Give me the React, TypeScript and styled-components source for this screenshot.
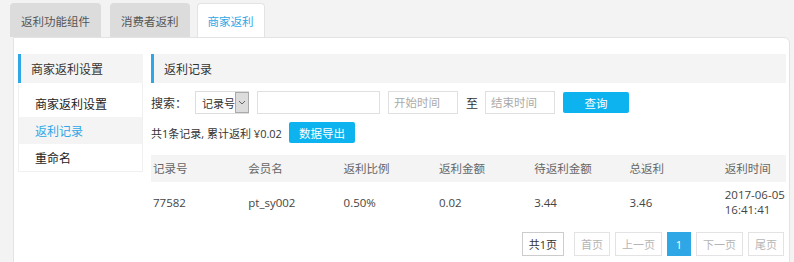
import * as React from "react";
import styled, { createGlobalStyle } from "styled-components";

const colors = {
  page: "#f3f3f3",
  line: "#e3e3e3",
  tabOff: "#dcdcdc",
  text: "#333",
  muted: "#666",
  blue: "#2fa7e6",
  button: "#0db3ef",
  softBg: "#f4f4f4",
};

const GlobalStyle = createGlobalStyle`
  html, body {
    margin: 0;
    padding: 0;
    background: ${colors.page};
    font-family: "Open Sans", "Noto Sans CJK SC", sans-serif;
    font-size: 12px;
    color: ${colors.text};
  }
  * { box-sizing: border-box; }
`;

const Page = styled.div`
  padding: 4px 4px 0 10px;
  height: 262px;
  overflow: hidden;
`;

const TabBar = styled.div`
  display: flex;
  align-items: flex-end;
  height: 33px;
`;

const Tab = styled.div<{ active?: boolean; gap?: number }>`
  height: 34px;
  margin-right: ${p => p.gap ?? 0}px;
  padding: 0 10px;
  display: flex;
  align-items: center;
  font-size: 11.5px;
  border-radius: 4px 4px 0 0;
  background: ${p => (p.active ? "#fff" : colors.tabOff)};
  color: ${p => (p.active ? colors.blue : "#555")};
  border: 1px solid ${p => (p.active ? colors.line : colors.tabOff)};
  border-bottom: none;
  position: relative;
  z-index: 1;
`;

const Panel = styled.div`
  margin-left: 3px;
  background: #fff;
  border: 1px solid ${colors.line};
  border-radius: 0 6px 0 0;
  padding: 16px 3px 0 4px;
  display: flex;
  gap: 8px;
  height: 240px;
`;

const Sidebar = styled.div`
  width: 125px;
  flex: none;
`;

const BarTitle = styled.div`
  height: 29px;
  display: flex;
  align-items: center;
  padding-left: 10px;
  background: ${colors.softBg};
  border-left: 3px solid ${colors.blue};
  font-size: 12px;
  color: #333;
`;

const MenuList = styled.div`
  border: 1px solid #f0f0f0;
  border-top: none;
  padding: 7px 0 0;
`;

const MenuItem = styled.div<{ active?: boolean }>`
  height: 27px;
  display: flex;
  align-items: center;
  padding-left: 16px;
  font-size: 12px;
  color: ${p => (p.active ? colors.blue : "#222")};
  background: ${p => (p.active ? colors.softBg : "transparent")};
`;

const Main = styled.div`
  flex: 1;
  min-width: 0;
`;

const SearchRow = styled.div`
  display: flex;
  align-items: center;
  height: 23px;
  margin-top: 8px;
`;

const Label = styled.span<{ gap?: number; small?: boolean }>`
  margin-right: ${p => p.gap ?? 0}px;
  white-space: nowrap;
  font-size: ${p => (p.small ? 11 : 12)}px;
`;

const Select = styled.div`
  width: 54px;
  height: 23px;
  border: 1px solid #ddd;
  display: flex;
  align-items: center;
  justify-content: space-between;
  padding-left: 6px;
  margin-right: 8px;
  font-size: 11px;
  white-space: nowrap;
`;

const SelectArrow = styled.div`
  width: 14px;
  height: 21px;
  flex: none;
  background: #dcdcdc;
  border: 1px solid #aaa;
  display: flex;
  align-items: center;
  justify-content: center;
`;

const Input = styled.input<{ w: number }>`
  width: ${p => p.w}px;
  height: 23px;
  border: 1px solid #e0e0e0;
  padding: 0 5px;
  margin-right: 8px;
  font-family: inherit;
  font-size: 11.5px;
  color: #333;
  outline: none;
  &::placeholder { color: #aaa; }
`;

const Button = styled.button<{ left?: number }>`
  width: 66px;
  height: 21px;
  border: none;
  border-radius: 2px;
  background: ${colors.button};
  color: #fff;
  font-family: inherit;
  font-size: 11.5px;
  margin-left: ${p => p.left ?? 0}px;
  padding: 0;
`;

const SummaryRow = styled.div`
  display: flex;
  align-items: center;
  height: 21px;
  margin-top: 8px;
`;

const Table = styled.div`
  margin-top: 12px;
`;

const TableRow = styled.div<{ head?: boolean }>`
  display: grid;
  grid-template-columns: repeat(6, 95.3px) 1fr;
  align-items: center;
  height: ${p => (p.head ? 27 : 40)}px;
  background: ${p => (p.head ? colors.softBg : "#fff")};
  color: ${p => (p.head ? colors.muted : "#444")};
  padding-left: 2px;
  font-size: 11.5px;
  line-height: 15px;
`;

const Pager = styled.div`
  display: flex;
  justify-content: flex-end;
  gap: 5px;
  margin-top: 10px;
  padding-right: 2px;
`;

const PageBtn = styled.div<{ current?: boolean; dark?: boolean }>`
  height: 24px;
  min-width: 24px;
  padding: 0 6px;
  margin-right: ${p => (p.dark ? 5 : 0)}px;
  display: flex;
  align-items: center;
  justify-content: center;
  font-size: 11px;
  border: 1px solid ${p => (p.current ? "#2fa7e6" : p.dark ? "#ccc" : "#e3e3e3")};
  background: ${p => (p.current ? "#2fa7e6" : "#fff")};
  color: ${p => (p.current ? "#fff" : p.dark ? "#333" : "#b5b5b5")};
`;

const headers = ["记录号", "会员名", "返利比例", "返利金额", "待返利金额", "总返利", "返利时间"];

export default function App() {
  return (
    <Page>
      <GlobalStyle />
      <TabBar>
        <Tab gap={9}>返利功能组件</Tab>
        <Tab gap={7}>消费者返利</Tab>
        <Tab active>商家返利</Tab>
      </TabBar>
      <Panel>
        <Sidebar>
          <BarTitle>商家返利设置</BarTitle>
          <MenuList>
            <MenuItem>商家返利设置</MenuItem>
            <MenuItem active>返利记录</MenuItem>
            <MenuItem>重命名</MenuItem>
          </MenuList>
        </Sidebar>
        <Main>
          <BarTitle>返利记录</BarTitle>
          <SearchRow>
            <Label gap={8}>搜索：</Label>
            <Select>
              <span>记录号</span>
              <SelectArrow>
                <svg width="8" height="5" viewBox="0 0 8 5">
                  <path d="M1 1l3 3 3-3" fill="none" stroke="#666" strokeWidth="1" />
                </svg>
              </SelectArrow>
            </Select>
            <Input w={123} />
            <Input w={70} placeholder="开始时间" />
            <Label gap={7}>至</Label>
            <Input w={70} placeholder="结束时间" />
            <Button>查询</Button>
          </SearchRow>
          <SummaryRow>
            <Label small>共1条记录, 累计返利 ¥0.02</Label>
            <Button left={7}>数据导出</Button>
          </SummaryRow>
          <Table>
            <TableRow head>
              {headers.map(h => (
                <span key={h}>{h}</span>
              ))}
            </TableRow>
            <TableRow>
              <span>77582</span>
              <span>pt_sy002</span>
              <span>0.50%</span>
              <span>0.02</span>
              <span>3.44</span>
              <span>3.46</span>
              <span>
                2017-06-05
                <br />
                16:41:41
              </span>
            </TableRow>
          </Table>
          <Pager>
            <PageBtn dark>共1页</PageBtn>
            <PageBtn>首页</PageBtn>
            <PageBtn>上一页</PageBtn>
            <PageBtn current>1</PageBtn>
            <PageBtn>下一页</PageBtn>
            <PageBtn>尾页</PageBtn>
          </Pager>
        </Main>
      </Panel>
    </Page>
  );
}
